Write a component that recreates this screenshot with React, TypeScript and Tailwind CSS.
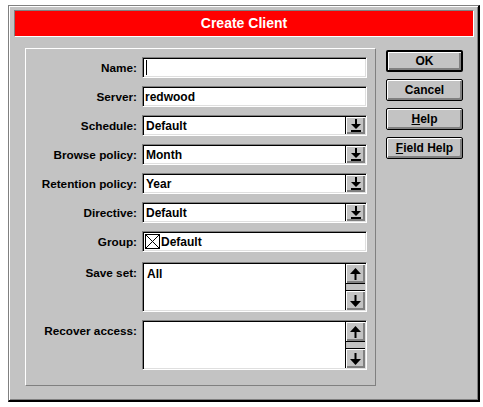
import React from "react";

const font = { fontFamily: '"Liberation Sans", Arial, sans-serif' };

const sunken =
  "border border-t-[#808080] border-l-[#808080] border-r-white border-b-white bg-white shadow-[inset_1px_1px_0_#000,inset_-1px_-1px_0_#dfdfdf]";

const raised =
  "bg-[#c3c3c3] shadow-[inset_1px_1px_0_#fff,inset_-1px_-1px_0_#808080,inset_-2px_-2px_0_#808080]";

function DropArrow() {
  return (
    <svg width="12" height="13" viewBox="0 0 12 13">
      <rect x="5" y="0" width="2" height="6" fill="#000" />
      <polygon points="1,5 11,5 6,10" fill="#000" />
      <rect x="1" y="11" width="10" height="2" fill="#000" />
    </svg>
  );
}

function UpArrow() {
  return (
    <svg width="11" height="12" viewBox="0 0 11 12">
      <polygon points="0,6 11,6 5.5,0" fill="#000" />
      <rect x="4.5" y="5" width="2" height="7" fill="#000" />
    </svg>
  );
}

function DownArrow() {
  return (
    <svg width="11" height="12" viewBox="0 0 11 12">
      <rect x="4.5" y="0" width="2" height="7" fill="#000" />
      <polygon points="0,6 11,6 5.5,12" fill="#000" />
    </svg>
  );
}

function Label({ children, top }: { children: React.ReactNode; top?: boolean }) {
  return (
    <div
      className={`w-[111px] shrink-0 text-right text-[11.75px] font-bold text-black leading-none whitespace-nowrap ${
        top ? "self-start pt-[5px]" : ""
      }`}
    >
      {children}
    </div>
  );
}

function TextField({ value, cursor }: { value?: string; cursor?: boolean }) {
  return (
    <div className={`${sunken} w-[225px] h-[21px] flex items-center pl-[2px] text-[12px] font-bold`}>
      {cursor && <div className="w-px h-[15px] bg-black ml-[1px]" />}
      {value}
    </div>
  );
}

function Combo({ value }: { value: string }) {
  return (
    <div className={`${sunken} w-[225px] h-[21px] flex items-stretch p-px`}>
      <div className="flex-1 flex items-center pl-[2px] text-[12px] font-bold">{value}</div>
      <div className={`${raised} w-[20px] border-l border-black flex items-center justify-center`}>
        <DropArrow />
      </div>
    </div>
  );
}

function ListBox({ value }: { value?: string }) {
  return (
    <div className={`${sunken} w-[225px] h-[50px] flex items-stretch p-px`}>
      <div className="flex-1 pl-[3px] pt-[3px] text-[12px] font-bold leading-tight">{value}</div>
      <div className="w-[20px] border-l border-black flex flex-col bg-[#c3c3c3]">
        <div className={`${raised} h-[20px] border-b border-black flex items-center justify-center`}>
          <UpArrow />
        </div>
        <div className="flex-1" />
        <div className={`${raised} h-[20px] border-t border-black flex items-center justify-center`}>
          <DownArrow />
        </div>
      </div>
    </div>
  );
}

function Row({ label, children, top }: { label: string; children: React.ReactNode; top?: boolean }) {
  return (
    <div className="flex items-center gap-[5px]">
      <Label top={top}>{label}</Label>
      {children}
    </div>
  );
}

function Btn({ children, primary }: { children: React.ReactNode; primary?: boolean }) {
  return (
    <div
      className={`${raised} w-[77px] h-[22px] rounded-[2px] border-black flex items-center justify-center text-[12px] font-bold ${
        primary ? "border-2" : "border"
      }`}
    >
      {children}
    </div>
  );
}

export default function App() {
  return (
    <div className="w-[483px] h-[407px] bg-white overflow-hidden pl-2 pt-[5px]" style={font}>
      <div className="w-[472px] h-[397px] bg-[#c3c3c3] border-t border-l border-[#808080] border-r-2 border-b-2 border-r-black border-b-black shadow-[inset_1px_1px_0_#fff,inset_-1px_-1px_0_#808080]">
        <div className="ml-[5px] mt-[4px] w-[460px] h-[27px] bg-[#ff0000] border border-t-[#808080] border-l-[#808080] border-r-white border-b-white flex items-center justify-center text-white text-[14px] font-bold">
          Create Client
        </div>

        <div className="flex ml-[16px] mt-[11px] gap-[10px]">
          <div className="w-[351px] h-[338px] border border-t-white border-l-white border-r-[#808080] border-b-[#808080] pt-[8px] flex flex-col gap-[8px]">
            <Row label="Name:">
              <TextField cursor />
            </Row>
            <Row label="Server:">
              <TextField value="redwood" />
            </Row>
            <Row label="Schedule:">
              <Combo value="Default" />
            </Row>
            <Row label="Browse policy:">
              <Combo value="Month" />
            </Row>
            <Row label="Retention policy:">
              <Combo value="Year" />
            </Row>
            <Row label="Directive:">
              <Combo value="Default" />
            </Row>
            <Row label="Group:">
              <div className={`${sunken} w-[225px] h-[21px] flex items-center pl-[2px] gap-[1px] text-[12px] font-bold`}>
                <svg width="15" height="15" viewBox="0 0 15 15">
                  <rect x="0.5" y="0.5" width="14" height="14" fill="#fff" stroke="#000" />
                  <line x1="1" y1="1" x2="14" y2="14" stroke="#000" />
                  <line x1="14" y1="1" x2="1" y2="14" stroke="#000" />
                </svg>
                Default
              </div>
            </Row>
            <div className="mt-[2px]">
              <Row label="Save set:" top>
                <ListBox value="All" />
              </Row>
            </div>
            <Row label="Recover access:" top>
              <ListBox />
            </Row>
          </div>

          <div className="flex flex-col gap-[7px] pt-[2px]">
            <Btn primary>OK</Btn>
            <Btn>Cancel</Btn>
            <Btn>
              <span>
                <span className="underline">H</span>elp
              </span>
            </Btn>
            <Btn>
              <span>
                <span className="underline">F</span>ield Help
              </span>
            </Btn>
          </div>
        </div>
      </div>
    </div>
  );
}
